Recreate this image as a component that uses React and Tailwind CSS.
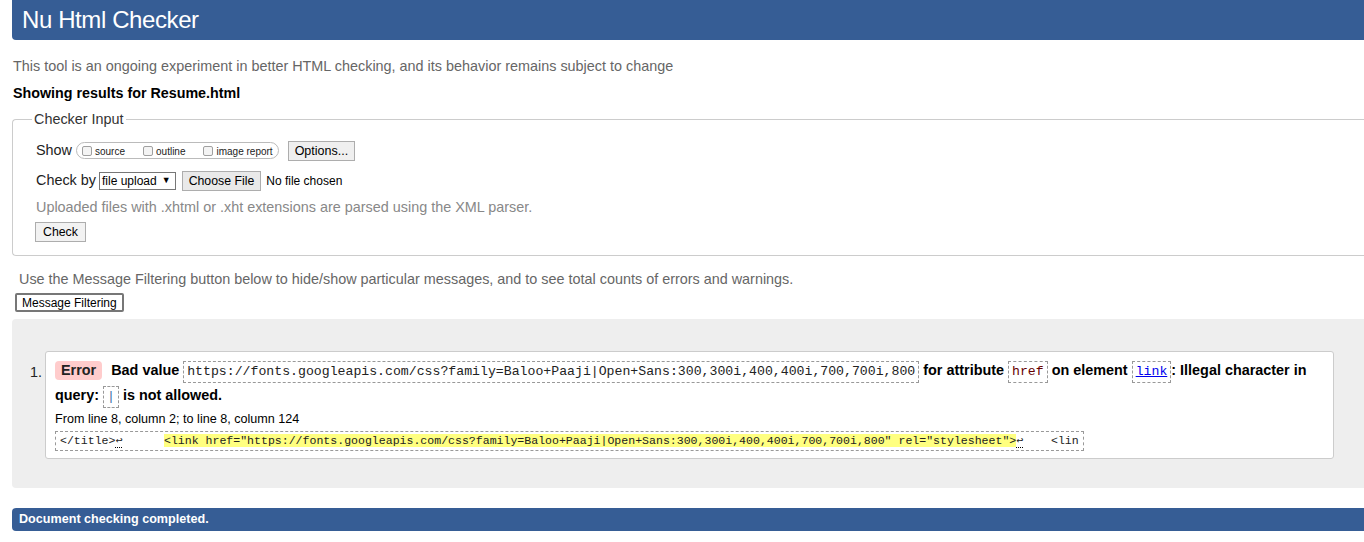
import React from "react";

const sans = "font-['Liberation_Sans',Arial,sans-serif]";
const mono = "font-['Liberation_Mono','DejaVu_Sans_Mono',monospace]";

const Box = ({ children, className = "" }) => (
  <code className={`${mono} inline-block border border-dashed border-[#999] px-[3px] leading-[20px] text-[13.2px] font-normal ${className}`}>
    {children}
  </code>
);

const Check = ({ label }) => (
  <label className="flex items-center gap-[3px]">
    <span className="inline-block h-[10px] w-[10px] rounded-[2px] border border-[#a0a0a0] bg-[#f4f4f4]" />
    <span className="text-[10px] text-[#222] pt-[2px]">{label}</span>
  </label>
);

const App = () => {
  return (
    <div className={`${sans} min-h-[542px] overflow-hidden bg-white pl-[12px] text-[14.4px] text-black`}>
      {/* Header */}
      <div className="flex h-[40px] items-center rounded-bl-[4px] bg-[#365d95] pl-[10px]">
        <h1 className="text-[24px] leading-none text-white tracking-[-0.4px]">Nu Html Checker</h1>
      </div>

      <p className="mt-[18px] ml-[1px] text-[14.4px] leading-[16px] text-[#666]">
        This tool is an ongoing experiment in better HTML checking, and its behavior remains subject to change
      </p>
      <p className="mt-[11px] ml-[1px] text-[14.3px] font-bold leading-[16px]">Showing results for Resume.html</p>

      {/* Checker input */}
      <fieldset className="mt-[8px] h-[147px] rounded-l-[4px] border border-r-0 border-[#ccc] pl-[23px]">
        <legend className="-ml-[4px] px-[2px] text-[14.4px] text-[#333]">Checker Input</legend>

        <div className="mt-[10px] flex h-[20px] items-center">
          <span className="text-[14.4px] text-[#222]">Show</span>
          <div className="ml-[4px] flex h-[17px] items-center gap-[18px] rounded-full border border-[#bbb] px-[5px]">
            <Check label="source" />
            <Check label="outline" />
            <Check label="image report" />
          </div>
          <button className="ml-[9px] h-[20px] border border-[#adadad] bg-[#efefef] px-[6px] text-[12.5px] text-black">
            Options...
          </button>
        </div>

        <div className="mt-[11px] flex h-[19px] items-center">
          <span className="text-[14.4px] text-[#222]">Check by</span>
          <div className="ml-[3px] flex h-[18px] items-center border border-[#777] bg-white pl-[2px] pr-[4px] text-[12px]">
            file upload <span className="ml-[5px] text-[9px]">▼</span>
          </div>
          <button className="ml-[6px] h-[20px] border border-[#adadad] bg-[#e9e9e9] px-[6px] text-[12.3px] text-black">
            Choose File
          </button>
          <span className="ml-[5px] text-[12px]">No file chosen</span>
        </div>

        <p className="mt-[8px] text-[14.4px] leading-[16px] text-[#888]">
          Uploaded files with .xhtml or .xht extensions are parsed using the XML parser.
        </p>
        <button className="mt-[7px] -ml-[1px] h-[20px] border border-[#adadad] bg-[#f2f2f2] px-[7px] text-[12.3px] text-black">
          Check
        </button>
      </fieldset>

      <p className="mt-[15px] ml-[7px] text-[14.4px] leading-[16px] text-[#666]">
        Use the Message Filtering button below to hide/show particular messages, and to see total counts of errors and warnings.
      </p>
      <button className="mt-[6px] ml-[3px] h-[19px] rounded-[2px] border-2 border-[#777] bg-white px-[5px] text-[12px] leading-none text-black">
        Message Filtering
      </button>

      {/* Results */}
      <div className="mt-[6px] h-[169px] rounded-l-[4px] bg-[#eeeeee] pt-[32px]">
        <ol className="flex">
          <li className="flex">
            <span className="w-[33px] pl-[18px] pt-[11px] text-[14.4px] text-[#222]">1.</span>
            <div className="w-[1289px] rounded-[3px] border border-[#ccc] bg-white pl-[9px] pr-[10px] pt-[6px] pb-[7px]">
              <p className="text-[14.4px] font-bold leading-[25px]">
                <span className="mr-[9px] inline-block rounded-[4px] bg-[#ffcccc] px-[6px] leading-[19px] text-[#222]">Error</span>
                Bad value{" "}
                <Box className="text-[#222]">https://fonts.googleapis.com/css?family=Baloo+Paaji|Open+Sans:300,300i,400,400i,700,700i,800</Box>{" "}
                for attribute <Box className="text-[#600]">href</Box> on element{" "}
                <Box>
                  <a className="text-[#00e] underline">link</a>
                </Box>
                : Illegal character in query: <Box className="text-[#3a6ea5]">|</Box> is not allowed.
              </p>
              <p className="mt-[3px] text-[12.6px] leading-[16px]">From line 8, column 2; to line 8, column 124</p>
              <p className="mt-[4px] leading-none">
                <code className={`${mono} inline-block whitespace-pre border border-dashed border-[#999] px-[4px] text-[11.55px] leading-[18px] text-[#222]`}>
                  {"</title>"}
                  <span className="border-b border-dotted border-black">↩</span>
                  {"      "}
                  <span className="bg-[#ffff80]">
                    {'<link href="https://fonts.googleapis.com/css?family=Baloo+Paaji|Open+Sans:300,300i,400,400i,700,700i,800" rel="stylesheet">'}
                  </span>
                  <span className="border-b border-dotted border-black">↩</span>
                  {"    <lin"}
                </code>
              </p>
            </div>
          </li>
        </ol>
      </div>

      {/* Footer */}
      <div className="mt-[20px] flex h-[23px] items-center rounded-l-[4px] bg-[#365d95] pl-[7px]">
        <p className="text-[12.6px] font-bold text-white">Document checking completed.</p>
      </div>
    </div>
  );
};

export default App;
